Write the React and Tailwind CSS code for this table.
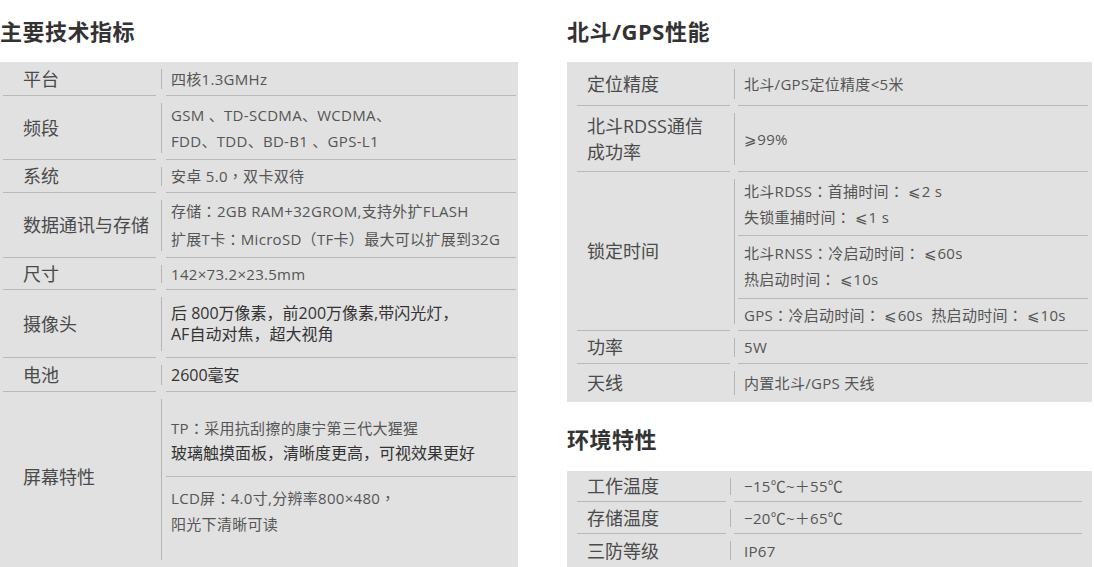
import React from 'react';

const LINE = 'border-[#b9b9b9]';

const leftRows = [
  { label: '平台', h: 'h-[34px]', cells: [{ lines: ['四核1.3GMHz'] }] },
  {
    label: '频段',
    h: 'h-[64px]',
    cells: [{ lines: ['GSM 、TD-SCDMA、WCDMA、', 'FDD、TDD、BD-B1 、GPS-L1'], lh: 'leading-[26px]' }]
  },
  { label: '系统', h: 'h-[33px]', cells: [{ lines: ['安卓 5.0，双卡双待'] }] },
  {
    label: '数据通讯与存储',
    h: 'h-[65px]',
    cells: [{ lines: ['存储：2GB RAM+32GROM,支持外扩FLASH', '扩展T卡：MicroSD（TF卡）最大可以扩展到32G'], lh: 'leading-[27px]' }]
  },
  { label: '尺寸', h: 'h-[32px]', cells: [{ lines: ['142×73.2×23.5mm'] }] },
  {
    label: '摄像头',
    h: 'h-[68px]',
    cells: [{ lines: ['后 800万像素，前200万像素,带闪光灯，', 'AF自动对焦，超大视角'], lh: 'leading-[21px]', dark: true }]
  },
  { label: '电池', h: 'h-[34px]', cells: [{ lines: ['2600毫安'], dark: true }] },
  {
    label: '屏幕特性',
    h: 'flex-1',
    last: true,
    labelPad: 'pb-[6px]',
    cells: [
      { lines: ['TP：采用抗刮擦的康宁第三代大猩猩', '玻璃触摸面板，清晰度更高，可视效果更好'], darkSecond: true, lh: 'leading-[25px]', h: 'h-[85px]', pad: 'justify-start pt-[23px]' },
      { lines: ['LCD屏：4.0寸,分辨率800×480，', '阳光下清晰可读'], lh: 'leading-[26px]', h: 'flex-1', pad: 'justify-start pt-[8px]' }
    ]
  }
];

const gpsRows = [
  { label: '定位精度', h: 'h-[44px]', cells: [{ lines: ['北斗/GPS定位精度<5米'] }] },
  { label: ['北斗RDSS通信', '成功率'], h: 'h-[66px]', cells: [{ lines: ['⩾99%'] }] },
  {
    label: '锁定时间',
    h: 'h-[159px]',
    cells: [
      { lines: ['北斗RDSS：首捕时间： ⩽2 s', '失锁重捕时间： ⩽1 s'], lh: 'leading-[26px]', h: 'h-[64px]' },
      { lines: ['北斗RNSS：冷启动时间： ⩽60s', '热启动时间： ⩽10s'], lh: 'leading-[25px]', h: 'h-[63px]', pad: 'pt-[4px]' },
      { lines: ['GPS：冷启动时间： ⩽60s  热启动时间： ⩽10s'], h: 'flex-1' }
    ]
  },
  { label: '功率', h: 'h-[33px]', cells: [{ lines: ['5W'] }] },
  { label: '天线', h: 'h-[38px]', last: true, cells: [{ lines: ['内置北斗/GPS 天线'] }] }
];

const envRows = [
  { label: '工作温度', h: 'h-[31px]', cells: [{ lines: ['−15℃~＋55℃'] }] },
  { label: '存储温度', h: 'h-[32px]', cells: [{ lines: ['−20℃~＋65℃'] }] },
  { label: '三防等级', h: 'flex-1', last: true, cells: [{ lines: ['IP67'] }] }
];

// light rows use centred full-width punctuation (TC style)
function Text({ str, centred }) {
  if (!centred) return str;
  return str.split(/([：，（）])/).map((part, i) =>
    /^[：，（）]$/.test(part) ? (
      <span key={i} className="font-['Noto_Sans_CJK_TC']">
        {part}
      </span>
    ) : (
      part
    )
  );
}

function Row({ row, labelW, zoneW, labelPl, valuePl }) {
  const labelLines = Array.isArray(row.label) ? row.label : [row.label];
  return (
    <div className={`flex ${row.h}`}>
      <div
        className={`${labelW} shrink-0 flex flex-col justify-center ${labelPl} ${row.labelPad || ''} ${
          row.last ? '' : `border-b ${LINE}`
        } text-[18px] text-[#4a4a4a] ${labelLines.length > 1 ? 'leading-[26px]' : 'leading-[24px]'}`}
      >
        {labelLines.map((l) => (
          <div key={l}>{l}</div>
        ))}
      </div>
      <div className={`${zoneW} shrink-0 flex justify-center py-[7px]`}>
        <div className="w-px bg-[#b5b5b5]" />
      </div>
      <div className={`flex-1 flex flex-col ${row.last ? '' : `border-b ${LINE}`}`}>
        {row.cells.map((c, i) => (
          <div
            key={i}
            className={`flex flex-col ${c.pad || 'justify-center'} ${valuePl} ${c.h || 'flex-1'} ${c.lh || 'leading-[22px]'} ${
              i < row.cells.length - 1 ? `border-b ${LINE}` : ''
            } text-[15px] tracking-[0.3px] text-[#555]`}
          >
            {c.lines.map((l, j) => {
              const dark = c.dark || (c.darkSecond && j === 1);
              return (
                <div key={j} className={`whitespace-pre ${dark ? 'text-[#333] text-[16px] tracking-normal' : ''}`}>
                  <Text str={l} centred={!dark} />
                </div>
              );
            })}
          </div>
        ))}
      </div>
    </div>
  );
}

const Title = ({ children }) => (
  <h2 className="h-[22px] text-[22px] leading-[22px] font-bold text-[#333] tracking-[0.5px]">{children}</h2>
);

export default function App() {
  return (
    <div
      className="w-[1094px] h-[567px] overflow-hidden bg-white flex gap-[49px]"
      style={{ fontFamily: '"Open Sans", "Noto Sans CJK SC", sans-serif' }}
    >
      {/* 主要技术指标 */}
      <section className="w-[518px] flex flex-col pt-[20px]">
        <Title>主要技术指标</Title>
        <div className="mt-[20px] flex-1 flex flex-col bg-[#e1e1e1] pl-[3px] pr-[2px]">
          {leftRows.map((r) => (
            <Row key={r.label} row={r} labelW="w-[153px]" zoneW="w-[10px]" labelPl="pl-[20px]" valuePl="pl-[5px]" />
          ))}
        </div>
      </section>

      {/* 北斗/GPS + 环境 */}
      <section className="w-[525px] flex flex-col pt-[20px]">
        <Title>北斗/GPS性能</Title>
        <div className="mt-[20px] flex flex-col bg-[#e1e1e1] pl-[10px] pr-[4px]">
          {gpsRows.map((r) => (
            <Row key={String(r.label)} row={r} labelW="w-[153px]" zoneW="w-[8px]" labelPl="pl-[10px]" valuePl="pl-[6px]" />
          ))}
        </div>
        <div className="mt-[26px]">
          <Title>环境特性</Title>
        </div>
        <div className="mt-[21px] flex-1 flex flex-col bg-[#e1e1e1] pl-[10px] pr-[10px]">
          {envRows.map((r) => (
            <Row key={r.label} row={r} labelW="w-[149px]" zoneW="w-[8px]" labelPl="pl-[10px]" valuePl="pl-[10px]" />
          ))}
        </div>
      </section>
    </div>
  );
}
